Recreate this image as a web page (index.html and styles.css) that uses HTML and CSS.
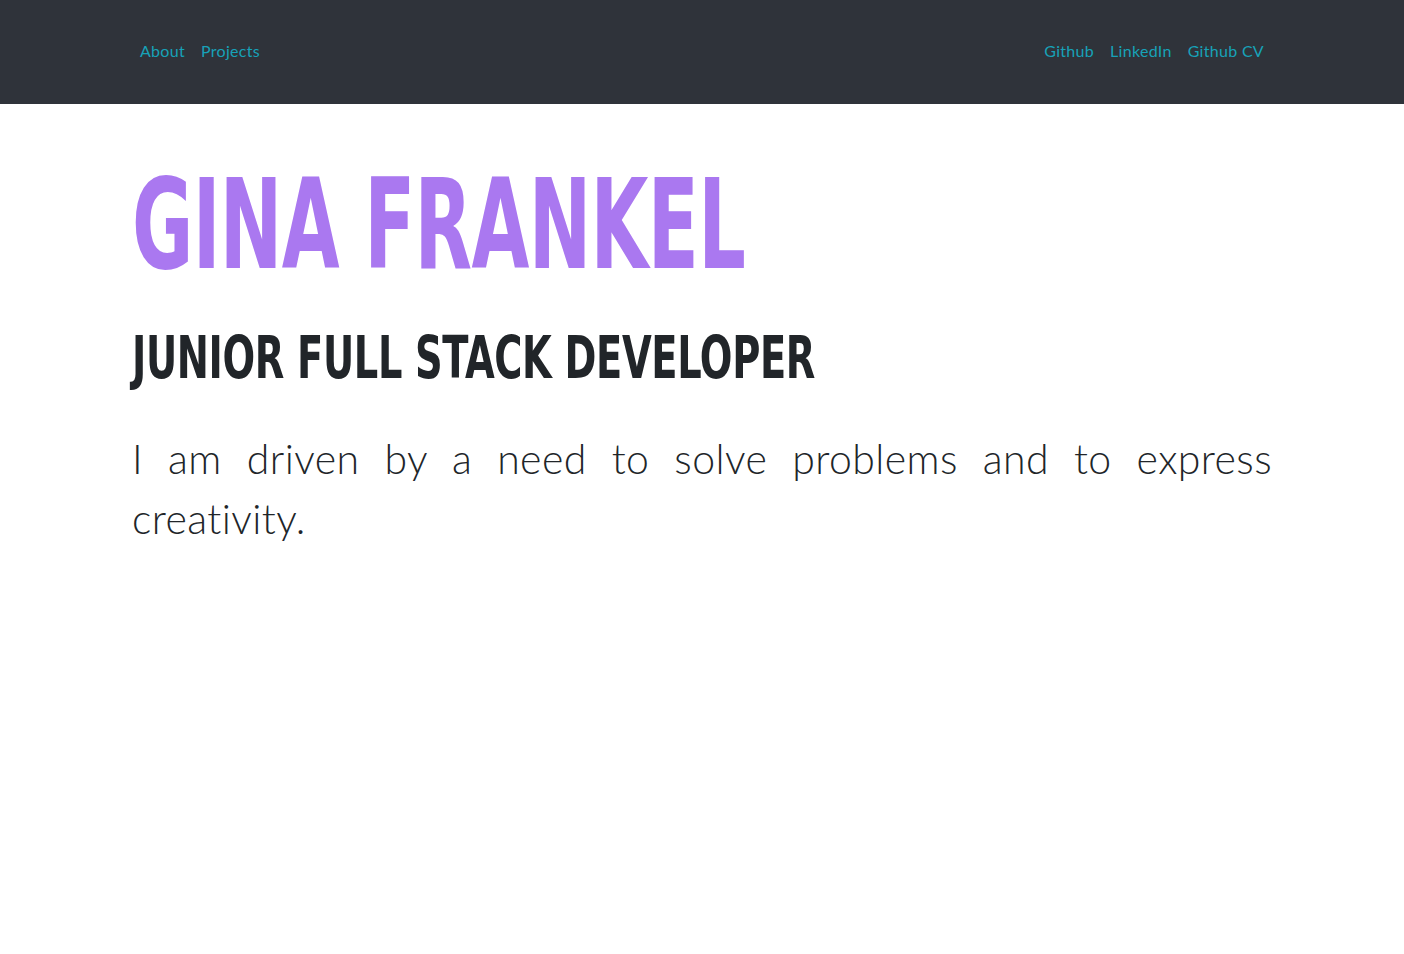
FILE: index.html
```html
<!DOCTYPE html>
<html lang="en">
<head>
<meta charset="utf-8">
<title>Gina Frankel</title>
<link rel="stylesheet" href="styles.css">
</head>
<body>
<nav class="navbar">
  <div class="container nav-inner">
    <ul class="nav-list">
      <li><a class="nav-link" href="#">About</a></li>
      <li><a class="nav-link" href="#">Projects</a></li>
    </ul>
    <ul class="nav-list">
      <li><a class="nav-link" href="#">Github</a></li>
      <li><a class="nav-link" href="#">LinkedIn</a></li>
      <li><a class="nav-link" href="#">Github CV</a></li>
    </ul>
  </div>
</nav>
<main class="container hero">
  <h1 class="name"><span class="squeeze">GINA FRANKEL</span></h1>
  <h2 class="role"><span class="squeeze">JUNIOR FULL STACK DEVELOPER</span></h2>
  <p class="intro">I am driven by a need to solve problems and to express creativity.</p>
</main>
</body>
</html>
```
FILE: styles.css
```css
* { box-sizing: border-box; }
html, body { margin: 0; padding: 0; }
body {
  background: #ffffff;
  color: #212529;
  font-family: "Lato", "Open Sans", sans-serif;
}
.container {
  width: 1140px;
  margin: 0 auto;
}
.navbar {
  background: #2f333a;
  height: 104px;
  display: flex;
  align-items: center;
}
.nav-inner {
  display: flex;
  justify-content: space-between;
  align-items: center;
}
.nav-list {
  list-style: none;
  margin: 0;
  padding: 0;
  display: flex;
}
.nav-link {
  display: block;
  padding: 6px 8px 8px;
  color: #17a2b8;
  text-decoration: none;
  font-size: 16px;
  font-weight: 400;
  letter-spacing: 0.3px;
  line-height: 24px;
}
.hero {
  padding-top: 47px;
}
.squeeze {
  display: inline-block;
  transform-origin: left center;
  white-space: nowrap;
}
.name {
  margin: 0;
  font-family: "DejaVu Sans Condensed", "DejaVu Sans", sans-serif;
  font-weight: 700;
  font-size: 124px;
  line-height: 1.2;
  color: #aa78f0;
}
.name .squeeze {
  transform: scaleX(0.67);
  letter-spacing: -1px;
}
.role {
  margin: 23px 0 0;
  font-family: "DejaVu Sans Condensed", "DejaVu Sans", sans-serif;
  font-weight: 700;
  font-size: 59px;
  line-height: 1.2;
  color: #212529;
}
.role .squeeze {
  transform: scaleX(0.724);
  letter-spacing: -0.5px;
}
.intro {
  margin: 35px 0 0;
  font-size: 41px;
  font-weight: 300;
  letter-spacing: 0.4px;
  line-height: 60px;
  text-align: justify;
  color: #212529;
}
```
